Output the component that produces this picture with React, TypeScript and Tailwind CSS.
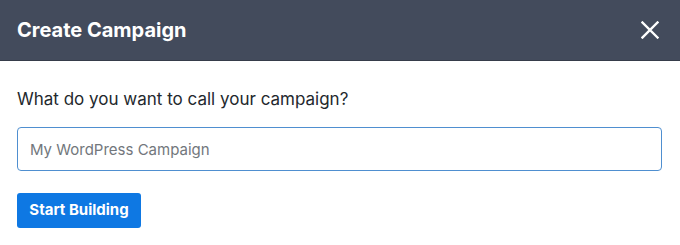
import { useState } from 'react';

function CloseIcon() {
  return (
    <svg width="18" height="18" viewBox="0 0 18 18" fill="none" aria-hidden="true">
      <path d="M1.5 1.5L16.5 16.5M16.5 1.5L1.5 16.5" stroke="white" strokeWidth="2.4" strokeLinecap="square" />
    </svg>
  );
}

export default function App() {
  const [name, setName] = useState('');

  return (
    <div className="h-[245px] w-[680px] bg-white font-['Inter',sans-serif]">
      <div className="flex h-[61px] items-center justify-between border-b border-[#363c4a] bg-[#434b5c] pl-[17px] pr-[20px]">
        <h1 className="text-[20px] font-bold text-white">Create Campaign</h1>
        <button type="button" aria-label="Close" className="flex h-5 w-5 items-center justify-center">
          <CloseIcon />
        </button>
      </div>
      <form className="px-[17px] pt-[25px]" onSubmit={(e) => e.preventDefault()}>
        <label htmlFor="campaign-name" className="block text-[17px] leading-[26px] text-[#23282d]">
          What do you want to call your campaign?
        </label>
        <input
          id="campaign-name"
          value={name}
          onChange={(e) => setName(e.target.value)}
          placeholder="My WordPress Campaign"
          className="mt-[15px] h-[44px] w-[645px] rounded-[4px] border border-[#4f8fd0] px-[12px] text-[15px] text-[#32373c] placeholder:text-[#72777c] outline-none"
        />
        <button
          type="submit"
          className="mt-[22px] flex h-[35px] w-[124px] items-center justify-center rounded-[3px] bg-[#0e78e3] text-[15px] font-bold text-white"
        >
          Start Building
        </button>
      </form>
    </div>
  );
}
